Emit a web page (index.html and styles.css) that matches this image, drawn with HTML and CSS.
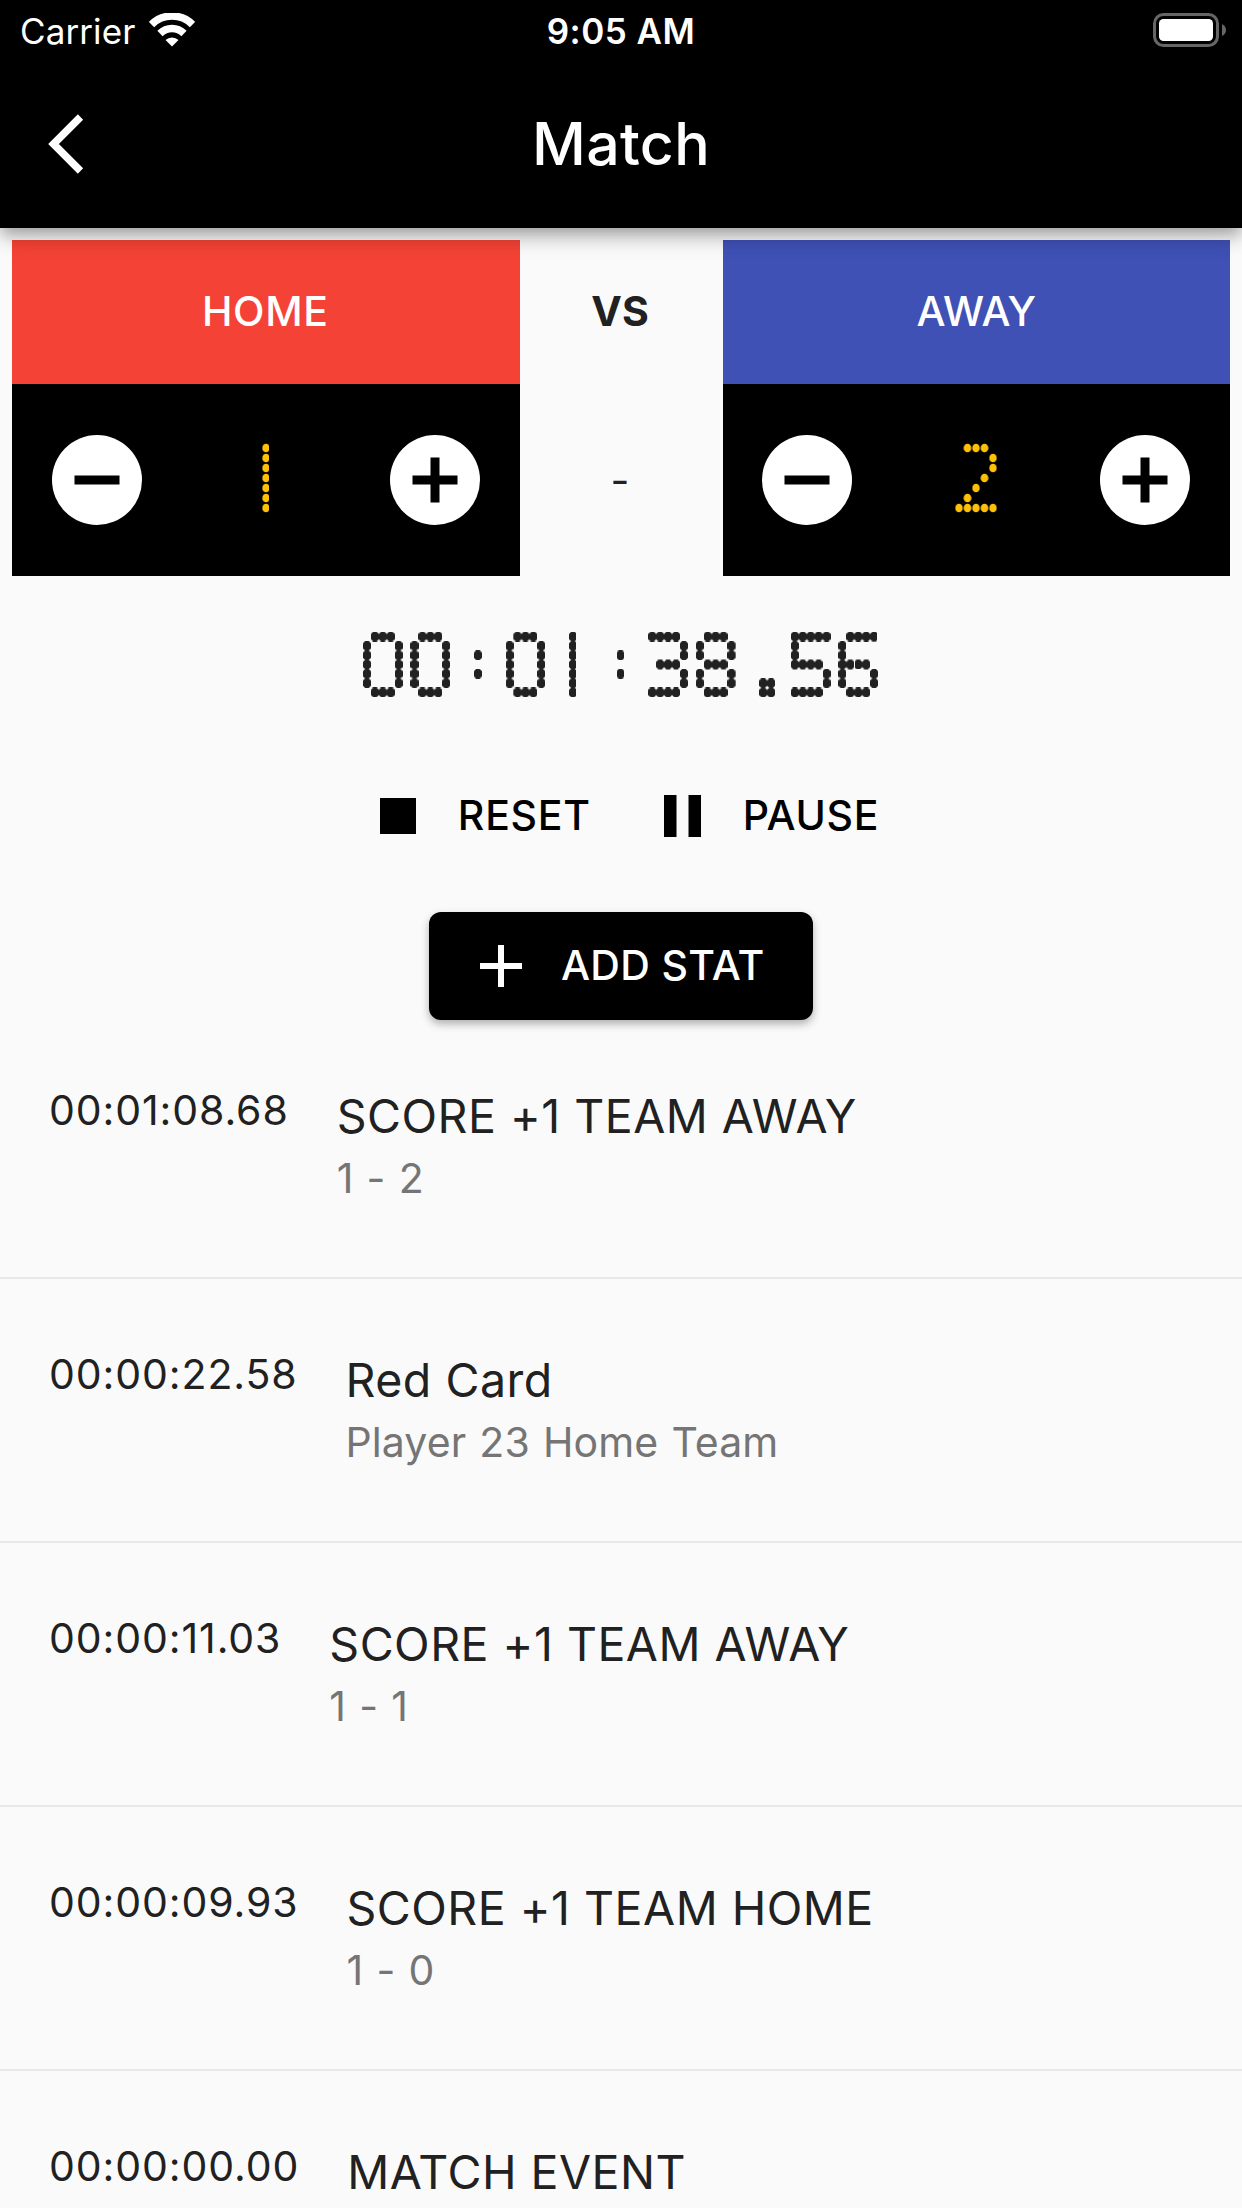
FILE: index.html
```
<!DOCTYPE html>
<html lang="en">
  <head>
    <meta charset="UTF-8" />
    <meta name="viewport" content="width=device-width, initial-scale=1.0" />
    <title>Match</title>
    <link rel="stylesheet" href="styles.css">
  </head>
  <body>
    <header>
      <div class="statusBar">
        <div class="carrier">
          <span>Carrier</span>
          <svg class="wifi" viewBox="0 0 46 34">
            <path d="M2.5 11.5 A29 29 0 0 1 43.5 11.5" />
            <path d="M11 20.5 A17 17 0 0 1 35 20.5" />
            <path class="wifiDot" d="M23 33.5 L16.5 27 A9.5 9.5 0 0 1 29.5 27 Z" />
          </svg>
        </div>
        <span class="clock">9:05 AM</span>
        <svg class="battery" viewBox="0 0 74 34">
          <rect class="shell" x="1.5" y="1.5" width="63" height="31" rx="9" />
          <rect class="charge" x="6" y="6" width="54" height="22" rx="4.5" />
          <path class="nub" d="M69 11 Q73 13 73 17 Q73 21 69 23 Z" />
        </svg>
      </div>
      <nav class="appBar">
        <svg class="back" viewBox="0 0 36 60">
          <path d="M32.5 3 L5.5 30 L32.5 57" />
        </svg>
        <h1>Match</h1>
      </nav>
    </header>

    <main>
      <section class="board">
        <div class="team">
          <div class="teamName home">HOME</div>
          <div class="score">
            <svg class="round" viewBox="0 0 90 90">
              <circle cx="45" cy="45" r="45" />
              <path d="M22.5 45 H67.5" />
            </svg>
            <svg class="digit" viewBox="0 0 60 110">
              <g mask="url(#scoreDots)"><g filter="url(#cells)"><g mask="url(#onePoints)">
                <text x="23" y="85">1</text>
              </g></g></g>
            </svg>
            <svg class="round" viewBox="0 0 90 90">
              <circle cx="45" cy="45" r="45" />
              <path d="M22.5 45 H67.5 M45 22.5 V67.5" />
            </svg>
          </div>
        </div>
        <div class="versus">
          <span class="vs">VS</span>
          <span class="dash">-</span>
        </div>
        <div class="team">
          <div class="teamName away">AWAY</div>
          <div class="score">
            <svg class="round" viewBox="0 0 90 90">
              <circle cx="45" cy="45" r="45" />
              <path d="M22.5 45 H67.5" />
            </svg>
            <svg class="digit" viewBox="0 0 60 110">
              <g mask="url(#scoreDots)"><g filter="url(#cells)"><g mask="url(#scorePoints)">
                <text x="30" y="85">2</text>
              </g></g></g>
            </svg>
            <svg class="round" viewBox="0 0 90 90">
              <circle cx="45" cy="45" r="45" />
              <path d="M22.5 45 H67.5 M45 22.5 V67.5" />
            </svg>
          </div>
        </div>
      </section>

      <!-- each character sits on a 6 x 7 dot cell, 48px wide -->
      <svg class="timer" viewBox="0 0 528 110">
        <defs>
          <pattern id="tp" width="8" height="9.4" patternUnits="userSpaceOnUse" y="22.1">
            <rect x="3" y="3.7" width="2" height="2" fill="#fff" />
          </pattern>
          <pattern id="td" width="8" height="9.4" patternUnits="userSpaceOnUse" y="22.1">
            <ellipse cx="4" cy="4.7" rx="4.5" ry="5" fill="#fff" />
          </pattern>
          <pattern id="sp" width="8.5" height="10" patternUnits="userSpaceOnUse" x="0.25" y="20">
            <rect x="3.25" y="4" width="2" height="2" fill="#fff" />
          </pattern>
          <pattern id="sd" width="8.5" height="10" patternUnits="userSpaceOnUse" x="0.25" y="20">
            <ellipse cx="4.25" cy="5" rx="3.8" ry="4.3" fill="#fff" />
          </pattern>
          <mask id="timerPoints" maskUnits="userSpaceOnUse" x="0" y="0" width="528" height="110">
            <rect y="22.1" width="528" height="65.8" fill="url(#tp)" />
            <!-- dots that stay off -->
            <rect x="8" y="31.5" width="24" height="47" />
            <rect x="56" y="31.5" width="24" height="47" />
            <rect x="152" y="31.5" width="24" height="47" />
            <rect x="184" y="22" width="24" height="66" />
            <rect x="216" y="22" width="24" height="66" />
            <rect x="280" y="22" width="8" height="66" />
            <rect x="288" y="31.5" width="32" height="18.8" />
            <rect x="288" y="59.7" width="32" height="18.8" />
            <rect x="320" y="22" width="8" height="9.5" />
            <rect x="320" y="50.3" width="8" height="9.4" />
            <rect x="320" y="78.5" width="8" height="9.5" />
            <rect x="328" y="22" width="8" height="66" />
            <rect x="344" y="31.5" width="24" height="18.8" />
            <rect x="344" y="59.7" width="24" height="18.8" />
            <rect x="336" y="78.5" width="8" height="9.5" />
            <rect x="368" y="78.5" width="8" height="9.5" />
            <rect x="424" y="22" width="8" height="66" />
            <rect x="440" y="31.5" width="32" height="18.8" />
            <rect x="432" y="59.7" width="32" height="18.8" />
            <rect x="464" y="50.3" width="8" height="9.4" />
            <rect x="464" y="78.5" width="8" height="9.5" />
            <rect x="472" y="22" width="8" height="66" />
            <rect x="480" y="22" width="8" height="9.5" />
            <rect x="488" y="31.5" width="32" height="18.8" />
            <rect x="488" y="59.7" width="24" height="18.8" />
            <rect x="512" y="50.3" width="8" height="9.4" />
            <rect x="480" y="78.5" width="8" height="9.5" />
            <rect x="512" y="78.5" width="8" height="9.5" />
          </mask>
          <mask id="timerDots" maskUnits="userSpaceOnUse" x="0" y="0" width="528" height="110">
            <rect width="528" height="110" fill="url(#td)" />
          </mask>
          <mask id="scorePoints" maskUnits="userSpaceOnUse" x="0" y="0" width="60" height="110">
            <rect width="60" height="110" fill="url(#sp)" />
            <rect x="8.75" y="30" width="34" height="20" />
          </mask>
          <mask id="onePoints" maskUnits="userSpaceOnUse" x="0" y="0" width="60" height="110">
            <rect x="26" width="8" height="110" fill="url(#sp)" />
          </mask>
          <mask id="scoreDots" maskUnits="userSpaceOnUse" x="0" y="0" width="60" height="110">
            <rect width="60" height="110" fill="url(#sd)" />
          </mask>
          <filter id="cells" x="-20%" y="-20%" width="140%" height="140%" color-interpolation-filters="sRGB">
            <feComponentTransfer><feFuncA type="linear" slope="40" intercept="-18" /></feComponentTransfer>
            <feMorphology operator="dilate" radius="3 4" />
          </filter>
        </defs>
        <g mask="url(#timerDots)"><g filter="url(#cells)"><g mask="url(#timerPoints)">
          <text y="83.5"><tspan x="20 68">00</tspan><tspan class="colon" x="116" y="66">:</tspan><tspan x="164 205" y="83.5">01</tspan><tspan class="colon" x="260" y="66">:</tspan><tspan class="bold" x="308" y="83.5">3</tspan><tspan x="356">8</tspan><tspan class="point" x="408" y="81.5">.</tspan><tspan class="bold" x="451 499" y="83.5">56</tspan></text>
        </g></g></g>
      </svg>

      <section class="controls">
        <button class="textBtn">
          <svg class="stop" viewBox="0 0 36 36"><rect width="36" height="36" /></svg>
          <span class="reset">RESET</span>
        </button>
        <button class="textBtn">
          <svg class="pause" viewBox="0 0 37 42"><path d="M0 0H12.5V42H0Z M24.5 0H37V42H24.5Z" /></svg>
          <span class="pauseText">PAUSE</span>
        </button>
      </section>

      <button class="addBtn">
        <svg viewBox="0 0 42 42"><path d="M0 21 H42 M21 0 V42" /></svg>
        <span>ADD STAT</span>
      </button>

      <ul class="events">
        <li>
          <time>00:01:08.68</time>
          <div class="event">
            <h2>SCORE +1 TEAM AWAY</h2>
            <p>1 - 2</p>
          </div>
        </li>
        <li>
          <time>00:00:22.58</time>
          <div class="event">
            <h2>Red Card</h2>
            <p>Player 23 Home Team</p>
          </div>
        </li>
        <li>
          <time>00:00:11.03</time>
          <div class="event">
            <h2>SCORE +1 TEAM AWAY</h2>
            <p>1 - 1</p>
          </div>
        </li>
        <li>
          <time>00:00:09.93</time>
          <div class="event">
            <h2>SCORE +1 TEAM HOME</h2>
            <p>1 - 0</p>
          </div>
        </li>
        <li>
          <time>00:00:00.00</time>
          <div class="event">
            <h2>MATCH EVENT</h2>
          </div>
        </li>
      </ul>
    </main>
  </body>
</html>
```
FILE: styles.css
```
* {
  margin: 0;
  padding: 0;
  box-sizing: border-box;
  font-family: Inter, Roboto, sans-serif;
}

body {
  background-color: #fafafa;
  color: #212121;
  width: 1242px;
  height: 2208px;
  overflow: hidden;
}

svg {
  display: block;
  flex: none;
}

header {
  position: relative;
  z-index: 1;
  height: 228px;
  background-color: #000;
  color: #fff;
  box-shadow: 0 6px 12px -3px rgba(0, 0, 0, 0.2),
    0 12px 15px 0 rgba(0, 0, 0, 0.14),
    0 3px 30px 0 rgba(0, 0, 0, 0.12);
}

.statusBar {
  display: grid;
  grid-template-columns: 1fr auto 1fr;
  align-items: center;
  height: 60px;
  padding: 0 15px 0 20px;
  font-size: 35px;
}

.statusBar span {
  padding-top: 2px;
}

.carrier {
  display: flex;
  align-items: center;
  gap: 14px;
  letter-spacing: 0.1px;
}

.wifi {
  width: 46px;
  height: 34px;
  fill: none;
  stroke: #fff;
  stroke-width: 7.5;
}

.wifiDot {
  fill: #fff;
  stroke: none;
}

.clock {
  margin-right: 5px;
  font-weight: 600;
  letter-spacing: 0.5px;
}

.battery {
  width: 74px;
  height: 34px;
  justify-self: end;
}

.shell {
  fill: none;
  stroke: #666;
  stroke-width: 3;
}

.charge {
  fill: #fff;
}

.nub {
  fill: #666;
}

.appBar {
  display: grid;
  grid-template-columns: 1fr auto 1fr;
  align-items: center;
  height: 168px;
  padding: 0 48px;
}

.back {
  width: 36px;
  height: 60px;
  fill: none;
  stroke: #fff;
  stroke-width: 7.5;
}

h1 {
  padding-bottom: 2px;
  font-size: 59px;
  font-weight: 500;
  letter-spacing: 0.3px;
}

main {
  display: flex;
  flex-direction: column;
  align-items: center;
  padding-top: 12px;
}

.board {
  display: grid;
  grid-template-columns: 5fr 2fr 5fr;
  width: 1218px;
  height: 336px;
}

.teamName {
  display: flex;
  align-items: center;
  justify-content: center;
  height: 144px;
  padding-bottom: 2px;
  color: #fff;
  font-size: 41px;
  font-weight: 500;
}

.home {
  background-color: #f44336;
  letter-spacing: 0.6px;
  padding-right: 1px;
}

.away {
  background-color: #3f51b5;
}

.score {
  display: grid;
  grid-template-columns: repeat(3, 1fr);
  place-items: center;
  height: 192px;
  background-color: #000;
}

.round {
  width: 90px;
  height: 90px;
  fill: #fff;
  stroke-width: 9;
}

.round path {
  stroke: #000;
}

.digit {
  width: 60px;
  height: 110px;
  margin-top: -4px;
  overflow: visible;
}

.digit text,
.timer text,
.timer tspan {
  font-family: Roboto, sans-serif;
  font-weight: 100;
  text-anchor: middle;
}

.digit text {
  font-size: 84px;
  fill: #ffc107;
  stroke: #ffc107;
  stroke-width: 6;
}

.versus {
  display: grid;
  grid-template-rows: 144px 192px;
  place-items: center;
  padding-right: 2px;
  font-size: 41px;
}

.vs {
  padding-bottom: 2px;
  font-weight: 700;
}

.timer {
  width: 523px;
  height: 109px;
  margin: 34px 0 0 6px;
  overflow: visible;
}

.timer text {
  font-size: 80px;
  fill: #212121;
  stroke: #212121;
  stroke-width: 7;
}

.timer .bold {
  stroke-width: 13;
}

.timer .colon {
  font-size: 40px;
}

.timer .point {
  stroke-width: 14;
}

.controls {
  display: flex;
  gap: 73px;
  height: 108px;
  margin-top: 43px;
  padding-left: 17px;
}

button {
  display: flex;
  align-items: center;
  border: none;
  background: none;
  font-size: 41px;
  font-weight: 500;
  letter-spacing: 0.3px;
  color: #000;
}

button span {
  padding-bottom: 2px;
}

.textBtn {
  gap: 42px;
  letter-spacing: 0.7px;
}

.stop {
  width: 36px;
  height: 36px;
}

.pause {
  width: 37px;
  height: 42px;
}

.addBtn {
  width: 384px;
  height: 108px;
  margin-top: 42px;
  padding-left: 51px;
  gap: 39px;
  border-radius: 12px;
  background-color: #000;
  color: #fff;
  box-shadow: 0 4px 8px rgba(0, 0, 0, 0.3);
}

.addBtn svg {
  width: 42px;
  height: 42px;
  stroke: #fff;
  stroke-width: 6;
}

.events {
  width: 100%;
  margin-top: -5px;
  list-style: none;
}

.events li {
  display: flex;
  gap: 48px;
  height: 264px;
  padding: 68px 48px 0 49px;
  border-bottom: 2px solid #e9e9e9;
}

.events li:last-child {
  height: 136px;
  border-bottom: none;
}

time {
  margin-top: 2px;
  font-size: 41px;
  line-height: 50px;
  letter-spacing: 0.9px;
}

h2 {
  font-size: 46.5px;
  font-weight: 400;
  line-height: 66px;
  letter-spacing: 0.5px;
}

p {
  margin-top: -1px;
  color: #757575;
  font-size: 41px;
  line-height: 60px;
  letter-spacing: 0.1px;
  word-spacing: 1.5px;
}
```
